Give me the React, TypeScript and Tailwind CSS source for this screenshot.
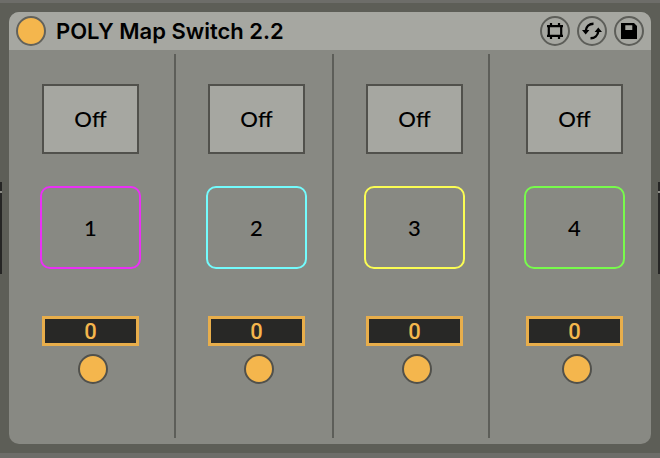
import type { ReactNode } from "react";

const channels = [
  { id: 1, column: "border-r-2 pr-[2px]", pad: "border-[#ea30f5]" },
  { id: 2, column: "border-r-2 pl-[5px]", pad: "border-[#73fbfd]" },
  { id: 3, column: "border-r-2 pl-[7px]", pad: "border-[#fbfd54]" },
  { id: 4, column: "pl-[8px]", pad: "border-[#78fb4c]" },
];

function HeaderButton({ label, children }: { label: string; children: ReactNode }) {
  return (
    <button
      type="button"
      aria-label={label}
      className="flex size-[30px] items-center justify-center rounded-full border-2 border-[#5d5e59]"
    >
      <svg viewBox="0 0 24 24" className="size-6 shrink-0" fill="none" stroke="#000" aria-hidden="true">
        {children}
      </svg>
    </button>
  );
}

function NeighbourEdge() {
  return (
    <div className="flex w-[2px] flex-col pt-[170px]">
      <div className="h-[9px] bg-[#262625]" />
      <div className="h-[2px] bg-[#8a8a84]" />
      <div className="h-[81px] bg-[#262625]" />
    </div>
  );
}

function Channel({ id, column, pad }: { id: number; column: string; pad: string }) {
  return (
    <section
      aria-label={`Channel ${id}`}
      className={`flex h-[384px] flex-col items-center border-[#5d5e59] pt-[30px] ${column}`}
    >
      <button
        type="button"
        className="h-[70px] w-[97px] border-2 border-[#51514c] bg-[#a6a7a1] text-[22px] leading-7"
      >
        Off
      </button>
      <button
        type="button"
        className={`mt-8 h-[83px] w-[101px] rounded-[10px] border-2 text-[22px] leading-7 ${pad}`}
      >
        {id}
      </button>
      <input
        type="text"
        inputMode="numeric"
        aria-label={`Value ${id}`}
        defaultValue="0"
        className="mt-[47px] h-[30px] w-[97px] border-[3px] border-[#e8ae4b] bg-[#282826] text-center font-['Roboto',sans-serif] text-[22px] leading-6 text-[#f4b64d] outline-none"
      />
      <div className="mt-2 pl-[5px]">
        <button
          type="button"
          aria-label={`Map ${id}`}
          className="block size-[30px] rounded-full border-2 border-[#51514c] bg-[#f4b64d]"
        />
      </div>
    </section>
  );
}

export default function App() {
  return (
    <div className="min-h-screen bg-[#5d5e57] font-['Lato',sans-serif] font-medium text-black">
      <div className="h-[3px] bg-[#6d6d69]" />
      <div className="flex gap-[7px] pt-[9px] pb-[9px]">
        <NeighbourEdge />
        <main className="flex-1 overflow-hidden rounded-[10px] bg-[#888983] pb-[6px]">
          <header className="flex h-[38px] items-center bg-[#a6a7a1] pr-[7px] pl-[7px]">
            <button
              type="button"
              aria-label="Device on"
              className="size-[30px] rounded-full border-2 border-[#62625c] bg-[#f4b64d]"
            />
            <h1 className="ml-[10px] flex-1 font-['Inter',sans-serif] text-[22px] leading-7 font-semibold">
              POLY Map Switch 2.2
            </h1>
            <div className="flex gap-[7px]">
              <HeaderButton label="Edit patch">
                <path d="M5.800 7v10M18.200 7v10M4 7.200h16M4 16.800h16M8 4v3M16 4v3M8 17v3M16 17v3" strokeWidth="2.200" />
              </HeaderButton>
              <HeaderButton label="Hot-swap">
                <path d="M13.500 4.800C9.500 4.800 6 7.500 5.700 12M10.500 19.200C14.500 19.200 18 16.500 18.300 12" strokeWidth="2.500" />
                <path d="M2 11h7.400l-3.700 4.500zM14.600 13h7.400l-3.700-4.500z" fill="#000" stroke="none" />
              </HeaderButton>
              <HeaderButton label="Save preset">
                <path fillRule="evenodd" d="M4 4h13l3 3v13H4zM8.300 6.300v4.700h7V6.300z" fill="#000" stroke="none" />
              </HeaderButton>
            </div>
          </header>
          <div className="grid grid-cols-[167fr_158fr_156fr_161fr] pt-1">
            {channels.map((channel) => (
              <Channel key={channel.id} {...channel} />
            ))}
          </div>
        </main>
        <NeighbourEdge />
      </div>
      <div className="h-[5px] bg-[#6d6d69]" />
    </div>
  );
}
